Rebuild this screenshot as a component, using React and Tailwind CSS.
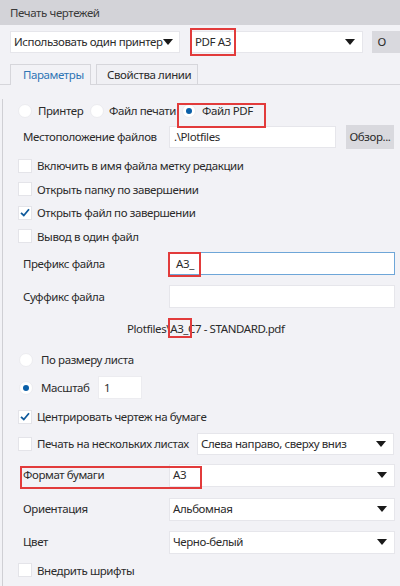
import React from "react";

const Arrow = () => (
  <svg width="10" height="6" viewBox="0 0 10 6" className="shrink-0">
    <path d="M0 0 L10 0 L5 6 Z" fill="#1a1a1a" />
  </svg>
);

const Select = ({ value, className = "", children }) => (
  <div className={"relative h-full bg-white border border-[#e6e6eb] flex items-center justify-between pl-[3px] pr-[7px] " + className}>
    <span className="whitespace-nowrap">{value}</span>
    <Arrow />
    {children}
  </div>
);

const Radio = ({ checked }) => (
  <div className="w-[14px] h-[14px] rounded-full bg-white border border-[#ececf0] flex items-center justify-center shrink-0">
    {checked && <div className="w-[6px] h-[6px] rounded-full bg-[#0a5fa8]" />}
  </div>
);

const Check = ({ checked }) => (
  <div className="w-[14px] h-[14px] bg-white border border-[#e4e4e9] flex items-center justify-center shrink-0">
    {checked && (
      <svg width="10" height="9" viewBox="0 0 10 9">
        <path d="M1 4.8 L3.8 7.5 L9 1.2" fill="none" stroke="#0f5a9c" strokeWidth="1.8" />
      </svg>
    )}
  </div>
);

const CheckRow = ({ checked, label, className = "" }) => (
  <div className={"h-[23.5px] flex items-center gap-[5px] pl-[15px] " + className}>
    <Check checked={checked} />
    <span className="whitespace-nowrap">{label}</span>
  </div>
);

const Red = ({ className }) => (
  <div className={"absolute border-2 border-[#e23b3b] pointer-events-none " + className} />
);

export default function App() {
  return (
    <div
      className="w-[400px] h-[586px] overflow-hidden bg-[#f2f2f6] text-[11.5px] tracking-[-0.4px] text-[#2b2b2b] leading-none"
      style={{ fontFamily: '"Noto Sans", "Open Sans", sans-serif' }}
    >
      <div className="h-[25px] bg-[#d3d3d8] flex items-center pl-[10px] text-[#3a3a3a]">Печать чертежей</div>

      <div className="mt-[6px] h-[22px] flex pl-[10px]">
        <Select value="Использовать один принтер" className="w-[170px]" />
        <div className="ml-[11px] w-[184px] h-full">
          <Select value="PDF A3">
            <Red className="left-[-2px] top-[-4px] w-[46px] h-[28px]" />
          </Select>
        </div>
        <div className="ml-[9px] w-[30px] h-full bg-[#d9d9de] flex items-center pl-[6px]">О</div>
      </div>

      <div className="mt-[12px] h-[20px] flex items-end pl-[10px] border-b border-[#d6d6db] relative">
        <div className="h-[21px] w-[81px] mb-[-1px] border border-b-0 border-[#d6d6db] bg-[#f2f2f6] flex items-center pl-[12px] text-[#2f75b5] whitespace-nowrap">Параметры</div>
        <div className="h-[20px] w-[102px] ml-[5px] border border-b-0 border-[#d6d6db] bg-[#f0f0f4] flex items-center pl-[10px] whitespace-nowrap">Свойства линии</div>
      </div>

      <div className="ml-[2px] border-l border-[#cfcfd4] h-[600px]">
        <div className="mt-[14px] h-[24px] flex items-center pl-[15px]">
          <div className="w-[72px] flex items-center gap-[6px]">
            <Radio />
            <span>Принтер</span>
          </div>
          <div className="w-[92px] flex items-center gap-[5px]">
            <Radio />
            <span className="whitespace-nowrap">Файл печати</span>
          </div>
          <div className="relative flex items-center gap-[6px]">
            <Radio checked />
            <span className="whitespace-nowrap">Файл PDF</span>
            <Red className="left-[-5px] top-[-1px] w-[89px] h-[25px]" />
          </div>
        </div>

        <div className="mt-[3px] h-[22px] flex items-center">
          <span className="w-[166px] pl-[20px] whitespace-nowrap">Местоположение файлов</span>
          <div className="w-[167px] h-full bg-white border border-[#e6e6eb] flex items-center pl-[4px]">.\Plotfiles</div>
          <div className="ml-[10px] w-[48px] h-[24px] bg-[#d9d9de] flex items-center justify-center">Обзор...</div>
        </div>

        <CheckRow className="mt-[6px]" label="Включить в имя файла метку редакции" />
        <CheckRow label="Открыть папку по завершении" />
        <CheckRow checked label="Открыть файл по завершении" />
        <CheckRow label="Вывод в один файл" />

        <div className="mt-[4px] h-[23px] flex items-center">
          <span className="w-[166px] pl-[20px]">Префикс файла</span>
          <div className="relative w-[226px] h-full bg-white border border-[#6ea6d8] flex items-center pl-[6px]">
            A3_
            <Red className="left-[-2px] top-[-1px] w-[33px] h-[25px]" />
          </div>
        </div>

        <div className="mt-[10px] h-[23px] flex items-center">
          <span className="w-[166px] pl-[20px]">Суффикс файла</span>
          <div className="w-[226px] h-full bg-white border border-[#e6e6eb]" />
        </div>

        <div className="mt-[11px] h-[20px] flex items-center pl-[124px] whitespace-nowrap">
          Plotfiles\
          <span className="relative">
            A3_
            <Red className="left-[-2px] top-[-5px] w-[24px] h-[20px]" />
          </span>
          C7 - STANDARD.pdf
        </div>

        <div className="mt-[9px] h-[24px] flex items-center gap-[8px] pl-[16px]">
          <Radio />
          <span>По размеру листа</span>
        </div>

        <div className="mt-[4px] h-[23px] flex items-center pl-[16px]">
          <Radio checked />
          <span className="ml-[8px] w-[57px]">Масштаб</span>
          <div className="w-[44px] h-full bg-white border border-[#ececf0] flex items-center pl-[5px]">1</div>
        </div>

        <CheckRow className="mt-[6px]" checked label="Центрировать чертеж на бумаге" />

        <div className="mt-[4px] h-[22px] flex items-center">
          <div className="w-[194px] flex items-center gap-[5px] pl-[15px]">
            <Check />
            <span className="whitespace-nowrap">Печать на нескольких листах</span>
          </div>
          <Select value="Слева направо, сверху вниз" className="w-[197px]" />
        </div>

        <div className="relative mt-[9px] h-[23px] flex items-center">
          <span className="w-[166px] pl-[20px]">Формат бумаги</span>
          <Select value="A3" className="w-[226px]" />
          <Red className="left-[17px] top-[2px] w-[182px] h-[23px]" />
        </div>

        <div className="mt-[11px] h-[23px] flex items-center">
          <span className="w-[166px] pl-[20px]">Ориентация</span>
          <Select value="Альбомная" className="w-[226px]" />
        </div>

        <div className="mt-[10px] h-[23px] flex items-center">
          <span className="w-[166px] pl-[20px]">Цвет</span>
          <Select value="Черно-белый" className="w-[226px]" />
        </div>

        <CheckRow className="mt-[5px]" label="Внедрить шрифты" />
      </div>
    </div>
  );
}
